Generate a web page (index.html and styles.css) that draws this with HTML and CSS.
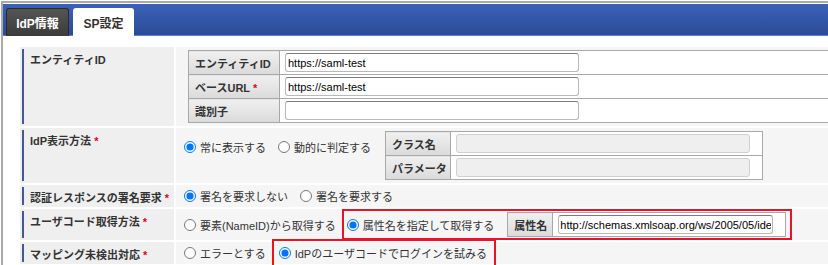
FILE: index.html
```html
<!DOCTYPE html>
<html lang="ja">
<head>
    <meta charset="UTF-8">
    <meta name="viewport" content="width=device-width, initial-scale=1.0">
    <title>IdP設定</title>
    <link rel="stylesheet" href="styles.css">
</head>
<body>
    <div class="frame">
        <!-- Tabs -->
        <div class="tabs">
            <span class="tab tab-dark">IdP情報</span>
            <span class="tab tab-light">SP設定</span>
        </div>

        <div class="content">
            <div class="form">
                <!-- Entity ID -->
                <div class="form-label"><div class="label-bar">エンティティID</div></div>
                <div class="form-value">
                    <table class="sub sub-entity">
                        <tr>
                            <th>エンティティID</th>
                            <td><input type="text" class="field" value="https://saml-test"></td>
                        </tr>
                        <tr>
                            <th>ベースURL<span class="req">*</span></th>
                            <td><input type="text" class="field" value="https://saml-test"></td>
                        </tr>
                        <tr>
                            <th>識別子</th>
                            <td><input type="text" class="field" value=""></td>
                        </tr>
                    </table>
                </div>

                <!-- Display method -->
                <div class="form-label"><div class="label-bar">IdP表示方法<span class="req">*</span></div></div>
                <div class="form-value value-top">
                    <div class="opts opts-top">
                        <label class="opt"><input type="radio" name="disp" checked>常に表示する</label>
                        <label class="opt"><input type="radio" name="disp">動的に判定する</label>
                    </div>
                    <table class="sub sub-display">
                        <tr>
                            <th>クラス名</th>
                            <td><input type="text" class="field" disabled></td>
                        </tr>
                        <tr>
                            <th>パラメータ</th>
                            <td><input type="text" class="field" disabled></td>
                        </tr>
                    </table>
                </div>

                <!-- Signature -->
                <div class="form-label"><div class="label-bar">認証レスポンスの署名要求<span class="req">*</span></div></div>
                <div class="form-value value-thin">
                    <label class="opt"><input type="radio" name="sign" checked>署名を要求しない</label>
                    <label class="opt"><input type="radio" name="sign">署名を要求する</label>
                </div>

                <!-- User code -->
                <div class="form-label"><div class="label-bar">ユーザコード取得方法<span class="req">*</span></div></div>
                <div class="form-value">
                    <label class="opt opt-first"><input type="radio" name="ucode">要素(NameID)から取得する</label>
                    <span class="mark mark-attr">
                        <label class="opt"><input type="radio" name="ucode" checked>属性名を指定して取得する</label>
                        <table class="sub sub-attr">
                            <tr>
                                <th>属性名</th>
                                <td><input type="text" class="field" value="http://schemas.xmlsoap.org/ws/2005/05/identity/claims/name"></td>
                            </tr>
                        </table>
                    </span>
                </div>

                <!-- Mapping not found -->
                <div class="form-label"><div class="label-bar">マッピング未検出対応<span class="req">*</span></div></div>
                <div class="form-value value-last">
                    <label class="opt"><input type="radio" name="nomap">エラーとする</label>
                    <span class="mark mark-login">
                        <label class="opt"><input type="radio" name="nomap" checked>IdPのユーザコードでログインを試みる</label>
                    </span>
                </div>
            </div>
        </div>
    </div>
</body>
</html>
```

FILE: styles.css
```css
/* Page */
body {
    margin: 0;
    overflow: hidden;
    background: #fff;
    font-family: "Liberation Sans", "Noto Sans CJK JP", sans-serif;
    font-size: 11px;
    color: #333;
}

.frame {
    width: 900px;
    height: 300px;
    margin: 1px 0 0 1px;
    border-top: 2px solid #a9a9a9;
    border-left: 2px solid #a9a9a9;
    box-sizing: border-box;
}

/* Tabs */
.tabs {
    display: flex;
    gap: 4px;
    height: 32px;
    margin-top: 1px;
    padding: 4px 0 0 3px;
    box-sizing: border-box;
    background: linear-gradient(#3a62b9, #2b4b97);
    border-bottom: 1px solid #5a7fd0;
}

.tab {
    display: flex;
    align-items: center;
    justify-content: center;
    height: 28px;
    border-radius: 3px 3px 0 0;
    font-size: 12px;
    font-weight: bold;
    box-sizing: border-box;
}

.tab-dark {
    width: 63px;
    background: linear-gradient(#555, #3b3b3b);
    border: 1px solid #2a2a2a;
    border-bottom: none;
    color: #fff;
}

.tab-light {
    width: 61px;
    height: 29px;
    background: #fff;
    color: #333;
}

/* Form grid */
.content {
    padding: 11px 0 0 17px;
}

.form {
    display: grid;
    grid-template-columns: 154px 1fr;
    gap: 2px;
}

.form-label {
    background: #efefef;
    padding: 2px 0 2px 2px;
    font-weight: bold;
}

.label-bar {
    height: 100%;
    border-left: 2px solid #4058a8;
    padding: 2px 0 0 6px;
    box-sizing: border-box;
}

.req {
    color: #e60012;
    margin-left: 3px;
}

.form-value {
    display: flex;
    align-items: center;
    background: #f5f5f5;
    padding: 3px 0 3px 8px;
}

.value-top {
    align-items: flex-start;
}

.value-thin {
    padding: 2px 0 2px 8px;
}

.value-last {
    padding: 3px 0 3px 8px;
}

/* Radios */
.opts {
    display: flex;
}

.opts-top {
    margin-top: 8px;
    margin-right: 2px;
}

.opt {
    display: inline-flex;
    align-items: center;
    height: 16px;
    margin-right: 12px;
    white-space: nowrap;
}

.opt input {
    width: 12px;
    height: 12px;
    margin: 0 4px 0 0;
}

.opt-first {
    margin-right: 9px;
}

/* Sub tables */
.sub {
    border-collapse: collapse;
    background: #fff;
}

.sub th,
.sub td {
    border: 1px solid #a8a8a8;
    height: 23px;
    padding: 0;
}

.sub th {
    text-align: left;
    font-weight: bold;
    padding-left: 6px;
    white-space: nowrap;
    background: linear-gradient(#f0f0f0, #dadada);
}

.sub td {
    padding: 0 12px 0 5px;
}

.sub-entity {
    margin-left: 4px;
    width: 700px;
}

.sub-entity th {
    width: 84px;
}

.sub-display th {
    width: 58px;
}

.sub-attr th {
    width: 38px;
}

.field {
    display: block;
    height: 19px;
    padding: 0 2px;
    border: 1px solid #b9b9b9;
    border-top-color: #7a7a7a;
    border-radius: 3px;
    box-sizing: border-box;
    font-family: "Liberation Sans", "Noto Sans CJK JP", sans-serif;
    font-size: 11px;
    color: #000;
    background: #fff;
}

.sub-entity .field {
    width: 294px;
}

.sub-display .field {
    width: 294px;
    background: #efefef;
    border-color: #d0d0d0;
}

.sub-attr .field {
    width: 215px;
    padding: 0 1px;
}

/* Red annotation boxes */
.mark {
    display: inline-flex;
    align-items: center;
    outline: 2px solid #e8141e;
}

.mark .opt {
    margin-right: 0;
}

.mark-attr {
    padding: 0 3px 0 2px;
    outline-offset: 1px;
    gap: 13px;
}

.mark-login {
    padding: 0 3px 0 1px;
    outline-offset: 4px;
}
```
